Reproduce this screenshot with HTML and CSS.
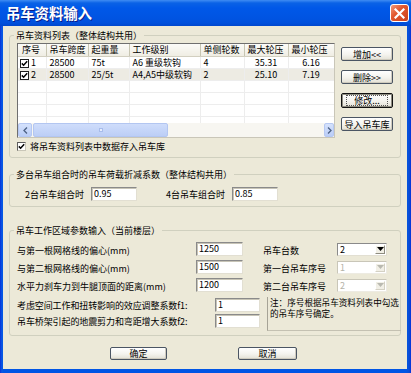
FILE: index.html
```html
<!DOCTYPE html>
<html lang="zh">
<head>
    <meta charset="UTF-8">
    <title>吊车资料输入</title>
    <link rel="stylesheet" href="styles.css">
</head>
<body>
    <div class="window">
        <!-- Title bar -->
        <div class="titlebar">
            <span class="title">吊车资料输入</span>
            <span class="close-btn">
                <svg width="11" height="11" viewBox="0 0 11 11"><path d="M1.5 1.5 L9.5 9.5 M9.5 1.5 L1.5 9.5" stroke="#fff" stroke-width="2.2" stroke-linecap="square"/></svg>
            </span>
        </div>

        <div class="client">
            <!-- Crane list -->
            <fieldset class="group group-list">
                <legend>吊车资料列表（整体结构共用）</legend>
                <div class="list-row">
                    <div class="listview">
                        <div class="lv-body">
                            <table class="lv-table">
                                <colgroup>
                                    <col style="width:28px"><col style="width:42px"><col style="width:41px"><col style="width:71px"><col style="width:44px"><col style="width:44px"><col style="width:46px">
                                </colgroup>
                                <thead>
                                    <tr>
                                        <th class="col-no">序号</th><th>吊车跨度</th><th>起重量</th><th>工作级别</th><th>单侧轮数</th><th>最大轮压</th><th>最小轮压</th>
                                    </tr>
                                </thead>
                                <tbody>
                                    <tr>
                                        <td class="col-no"><span class="lv-check"><svg width="7" height="7" viewBox="0 0 7 7"><path d="M0.8 3.4 L2.6 5.2 L6.2 1.2" fill="none" stroke="#000" stroke-width="1.5"/></svg></span>1</td>
                                        <td>28500</td><td>75t</td><td>A6 重级软钩</td><td>4</td><td class="center">35.31</td><td class="center">6.16</td>
                                    </tr>
                                    <tr class="alt">
                                        <td class="col-no"><span class="lv-check"><svg width="7" height="7" viewBox="0 0 7 7"><path d="M0.8 3.4 L2.6 5.2 L6.2 1.2" fill="none" stroke="#000" stroke-width="1.5"/></svg></span>2</td>
                                        <td>28500</td><td>25/5t</td><td>A4,A5中级软钩</td><td>2</td><td class="center">25.10</td><td class="center">7.19</td>
                                    </tr>
                                    <tr><td></td><td></td><td></td><td></td><td></td><td></td><td></td></tr>
                                    <tr><td></td><td></td><td></td><td></td><td></td><td></td><td></td></tr>
                                    <tr><td></td><td></td><td></td><td></td><td></td><td></td><td></td></tr>
                                    <tr><td></td><td></td><td></td><td></td><td></td><td></td><td></td></tr>
                                </tbody>
                            </table>
                        </div>
                        <div class="hscroll">
                            <span class="sb-btn sb-left"><svg width="5" height="7" viewBox="0 0 5 7"><path d="M4 0.5 L1 3.5 L4 6.5" fill="none" stroke="#4d6185" stroke-width="1.3"/></svg></span>
                            <span class="sb-thumb"><span class="grip"></span></span>
                            <span class="sb-track"></span>
                            <span class="sb-btn sb-right"><svg width="5" height="7" viewBox="0 0 5 7"><path d="M1 0.5 L4 3.5 L1 6.5" fill="none" stroke="#4d6185" stroke-width="1.3"/></svg></span>
                        </div>
                    </div>
                    <div class="side-buttons">
                        <button class="btn">增加&lt;&lt;</button>
                        <button class="btn">删除&gt;&gt;</button>
                        <button class="btn btn-default"><span class="focus">修改...</span></button>
                        <button class="btn">导入吊车库</button>
                    </div>
                </div>
                <div class="check-line">
                    <span class="checkbox"><svg width="7" height="7" viewBox="0 0 7 7"><path d="M0.8 3.4 L2.6 5.2 L6.2 1.2" fill="none" stroke="#000" stroke-width="1.5"/></svg></span>
                    <span>将吊车资料列表中数据存入吊车库</span>
                </div>
            </fieldset>

            <!-- Load reduction -->
            <fieldset class="group group-reduce">
                <legend>多台吊车组合时的吊车荷载折减系数（整体结构共用）</legend>
                <div class="reduce-row">
                    <span class="reduce-label">2台吊车组合时</span>
                    <span class="textbox w46">0.95</span>
                    <span class="reduce-label second">4台吊车组合时</span>
                    <span class="textbox w46">0.85</span>
                </div>
            </fieldset>

            <!-- Work area -->
            <fieldset class="group group-area">
                <legend>吊车工作区域参数输入（当前楼层）</legend>
                <div class="area-grid">
                    <span class="area-label">与第一根网格线的偏心(mm)</span>
                    <span class="textbox">1250</span>
                    <span class="right-label">吊车台数</span>
                    <span class="combo"><span class="combo-val">2</span><span class="combo-btn"><svg width="7" height="4" viewBox="0 0 7 4"><path d="M0 0 H7 L3.5 4 Z" fill="#000"/></svg></span></span>

                    <span class="area-label">与第二根网格线的偏心(mm)</span>
                    <span class="textbox">1500</span>
                    <span class="right-label">第一台吊车序号</span>
                    <span class="combo disabled"><span class="combo-val">1</span><span class="combo-btn"><svg width="7" height="4" viewBox="0 0 7 4"><path d="M0 0 H7 L3.5 4 Z" fill="#b9b9b0"/></svg></span></span>

                    <span class="area-label">水平力刹车力到牛腿顶面的距离(mm)</span>
                    <span class="textbox">1200</span>
                    <span class="right-label">第二台吊车序号</span>
                    <span class="combo disabled"><span class="combo-val">2</span><span class="combo-btn"><svg width="7" height="4" viewBox="0 0 7 4"><path d="M0 0 H7 L3.5 4 Z" fill="#b9b9b0"/></svg></span></span>
                </div>
                <div class="factor-part">
                    <div class="factor-grid">
                        <span class="factor-label">考虑空间工作和扭转影响的效应调整系数f1:</span>
                        <span class="textbox w45">1</span>
                        <span class="factor-label">吊车桥架引起的地震剪力和弯距增大系数f2:</span>
                        <span class="textbox w45">1</span>
                    </div>
                    <div class="note">注：序号根据吊车资料列表中勾选<br>的吊车序号确定。</div>
                </div>
            </fieldset>

            <div class="dialog-buttons">
                <button class="btn btn-ok">确定</button>
                <button class="btn btn-cancel">取消</button>
            </div>
        </div>
    </div>
</body>
</html>
```

FILE: styles.css
```css
/* Basic Reset */
* {
    margin: 0;
    padding: 0;
    box-sizing: border-box;
}

body {
    font-family: "Noto Sans CJK SC", "Liberation Sans", sans-serif;
    font-size: 9px;
    color: #000;
    background: #fff;
    width: 411px;
    height: 373px;
    overflow: hidden;
}

/* Window frame */
.window {
    width: 411px;
    height: 373px;
    display: flex;
    flex-direction: column;
    background: linear-gradient(to right, #0831D9 0, #0A5BE4 2px, #0055E5 3px, #0055E5 406px, #0A4FD5 409px, #0831D9 411px);
}

.titlebar {
    height: 26px;
    display: flex;
    align-items: center;
    justify-content: space-between;
    padding-left: 6px;
    padding-right: 2px;
    background: linear-gradient(to bottom, #3F8CF3 0, #0A62E6 3px, #0058E8 8px, #0054E2 18px, #0050DC 23px, #0047CD 26px);
}

.title {
    color: #fff;
    font-size: 14.5px;
    font-weight: bold;
    line-height: 18px;
    text-shadow: 1px 1px 0 #0A1E8A;
    letter-spacing: -0.2px;
}

.close-btn {
    width: 19px;
    height: 18px;
    display: flex;
    align-items: center;
    justify-content: center;
    border: 1px solid #fff;
    border-radius: 3px;
    background: linear-gradient(135deg, #F29A7C 0, #E2582F 40%, #C9401B 100%);
}

.client {
    flex: 1;
    margin: 0 4px 4px 3px;
    background: #ECE9D8;
    display: flex;
    flex-direction: column;
}

/* Group boxes */
.group {
    border: 1px solid #D0D0BF;
    border-radius: 3px;
    margin-left: 6px;
    width: 392px;
    padding: 0 7px;
    min-inline-size: 0;
}

.group legend {
    margin-left: -3px;
    padding: 0 2px;
    line-height: 11px;
    font-size: 9px;
}

.group-list {
    margin-top: 4px;
    padding-top: 2px;
    padding-bottom: 5px;
}

.list-row {
    display: flex;
}

/* List view */
.listview {
    width: 318px;
    height: 95px;
    border: 1px solid;
    border-color: #6F6F6F #C9C6B8 #C9C6B8 #6F6F6F;
    background: #fff;
    display: flex;
    flex-direction: column;
}

.lv-body {
    flex: 1;
    overflow: hidden;
}

.lv-table {
    table-layout: fixed;
    border-collapse: collapse;
    width: 316px;
}

.lv-table th {
    height: 12px;
    padding-left: 3px;
    font-weight: normal;
    text-align: left;
    white-space: nowrap;
    overflow: hidden;
    background: linear-gradient(to bottom, #FBFBF8 0, #EFEDE3 100%);
    border-right: 1px solid #C7C5B2;
    border-bottom: 1px solid #D2CFC0;
    line-height: 11px;
}

.lv-table td {
    height: 12px;
    padding-left: 3px;
    white-space: nowrap;
    overflow: hidden;
    line-height: 11px;
    border-right: 1px solid #EDEDED;
    border-bottom: 1px solid #EDEDED;
}

.lv-table .col-no {
    padding-left: 2px;
}

.lv-table th.col-no {
    padding-left: 4px;
}

.lv-table td.center {
    text-align: center;
    padding-left: 0;
}

.lv-table tr.alt td {
    background: #EDEBE3;
}

.lv-check {
    display: inline-flex;
    align-items: center;
    justify-content: center;
    width: 9px;
    height: 9px;
    border: 1px solid #1F1F1F;
    background: #fff;
    margin-right: 2px;
    vertical-align: -1px;
}

/* Horizontal scroll bar */
.hscroll {
    height: 14px;
    display: flex;
    background: #F7F6F1;
}

.sb-btn {
    display: flex;
    align-items: center;
    justify-content: center;
    background: linear-gradient(to bottom, #D5E2FC, #BACDF7);
    border: 1px solid #B6C8F2;
    border-radius: 2px;
}

.sb-left {
    width: 14px;
}

.sb-right {
    width: 10px;
}

.sb-thumb {
    width: 135px;
    margin-left: 1px;
    display: flex;
    align-items: center;
    justify-content: center;
    background: linear-gradient(to bottom, #CFDDFB, #BCCEF6);
    border: 1px solid #B3C6F1;
    border-radius: 2px;
}

.grip {
    width: 4px;
    height: 4px;
    background: #E6EDFD;
    border: 1px solid #A7BCEB;
}

.sb-track {
    flex: 1;
}

/* Buttons */
.btn {
    font-family: inherit;
    font-size: 9px;
    line-height: 11px;
    color: #000;
    height: 14px;
    border: 1px solid #4B5563;
    border-radius: 2px;
    background: linear-gradient(to bottom, #FFFFFF 0, #F4F3EE 55%, #E3E0D4 100%);
    box-shadow: inset -1px -1px 0 #CFCBBE;
    display: flex;
    align-items: center;
    justify-content: center;
}

.side-buttons {
    width: 53px;
    margin-left: 6px;
    margin-top: 4px;
    display: flex;
    flex-direction: column;
    gap: 9px;
}

.btn-default {
    height: 15px;
    border-color: #111;
    box-shadow: inset 0 0 0 1px #8E8C80;
}

.btn-default .focus {
    border: 1px dotted #555;
    padding: 0 7px;
    line-height: 9px;
}

.check-line {
    margin-top: 3px;
    height: 11px;
    display: flex;
    align-items: center;
}

.checkbox {
    width: 9px;
    height: 9px;
    border: 1px solid;
    border-color: #5E5E5E #C9C6B8 #C9C6B8 #5E5E5E;
    background: #fff;
    display: flex;
    align-items: center;
    justify-content: center;
    margin-right: 4px;
}

/* Text boxes */
.textbox {
    width: 47px;
    height: 14px;
    background: #fff;
    border: 1px solid;
    border-color: #8A8A8A #E2DFD2 #E2DFD2 #8A8A8A;
    box-shadow: inset 1px 1px 0 #C7C4B6;
    padding-left: 2px;
    line-height: 12px;
}

.w46 {
    width: 46px;
}

.w45 {
    width: 45px;
}

/* Reduction group */
.group-reduce {
    margin-top: 11px;
    padding-top: 7px;
    padding-bottom: 5px;
}

.reduce-row {
    display: flex;
    align-items: center;
    padding-left: 8px;
}

.reduce-label {
    width: 66px;
}

.reduce-label.second {
    margin-left: 29px;
}

/* Work area group */
.group-area {
    margin-top: 18px;
    padding-top: 6px;
    padding-bottom: 4px;
}

.area-grid {
    display: grid;
    grid-template-columns: 179px 47px 94px 50px;
    grid-auto-rows: 14px;
    row-gap: 4px;
    align-items: center;
}

.area-label {
    padding-top: 2px;
}

.right-label {
    margin-left: 20px;
    white-space: nowrap;
    padding-top: 2px;
}

.combo {
    height: 13px;
    width: 50px;
    display: flex;
    background: #fff;
    border: 1px solid;
    border-color: #8A8A8A #E2DFD2 #E2DFD2 #8A8A8A;
}

.combo-val {
    flex: 1;
    padding-left: 2px;
    line-height: 11px;
}

.combo-btn {
    width: 10px;
    margin: 1px;
    display: flex;
    align-items: center;
    justify-content: center;
    background: #F1EFE6;
    border: 1px solid;
    border-color: #FFFFFF #8E8C80 #8E8C80 #FFFFFF;
}

.combo.disabled {
    border-color: #C9C6B8 #EDEBE2 #EDEBE2 #C9C6B8;
}

.combo.disabled .combo-val {
    color: #B5B3A8;
}

.combo.disabled .combo-btn {
    border-color: #FFFFFF #D4D1C4 #D4D1C4 #FFFFFF;
}

.factor-part {
    margin-top: 6px;
    display: flex;
    align-items: flex-start;
}

.factor-grid {
    display: grid;
    grid-template-columns: 198px 45px;
    grid-auto-rows: 14px;
    row-gap: 2px;
    align-items: center;
}

.factor-label {
    white-space: nowrap;
    letter-spacing: -0.1px;
}

.note {
    flex-shrink: 0;
    width: 134px;
    height: 34px;
    margin-left: 7px;
    margin-top: -1px;
    border-left: 1px solid #A6A396;
    border-bottom: 1px solid #C4C1B2;
    padding-left: 2px;
    font-size: 8.6px;
    line-height: 10.5px;
    white-space: nowrap;
}

/* OK / Cancel */
.dialog-buttons {
    margin-top: 11px;
    margin-left: 107px;
    display: flex;
    gap: 71px;
}

.btn-ok,
.btn-cancel {
    height: 13px;
}

.btn-ok {
    width: 57px;
}

.btn-cancel {
    width: 59px;
}
```
